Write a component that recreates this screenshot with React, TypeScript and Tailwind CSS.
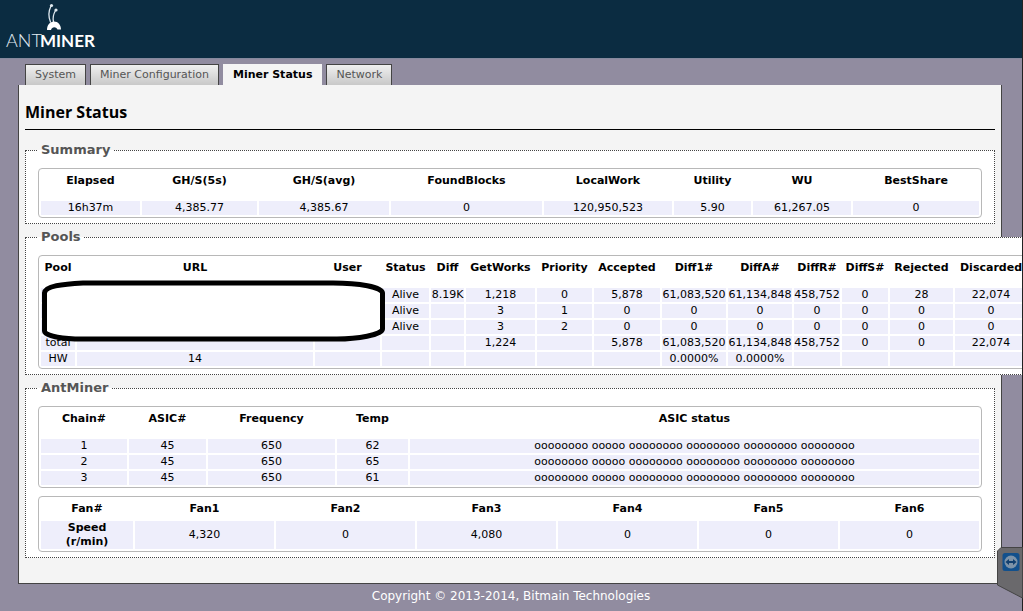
import React from 'react';

type Column = { label: string; width: string };

interface DataTableProps {
  columns: Column[];
  rows: string[][];
  compactHead?: boolean;
  rowHeaders?: boolean;
  className?: string;
}

const TABS = ['System', 'Miner Configuration', 'Miner Status', 'Network'];

const SUMMARY_COLUMNS: Column[] = [
  { label: 'Elapsed', width: 'w-[99px]' },
  { label: 'GH/S(5s)', width: 'w-[115px]' },
  { label: 'GH/S(avg)', width: 'w-[130px]' },
  { label: 'FoundBlocks', width: 'w-[151px]' },
  { label: 'LocalWork', width: 'w-[128px]' },
  { label: 'Utility', width: 'w-[77px]' },
  { label: 'WU', width: 'w-[98px]' },
  { label: 'BestShare', width: 'w-[126px]' },
];

const SUMMARY_ROWS = [
  ['16h37m', '4,385.77', '4,385.67', '0', '120,950,523', '5.90', '61,267.05', '0'],
];

const POOL_COLUMNS: Column[] = [
  { label: 'Pool', width: 'w-[34px]' },
  { label: 'URL', width: 'w-[236px]' },
  { label: 'User', width: 'w-[65px]' },
  { label: 'Status', width: 'w-[47px]' },
  { label: 'Diff', width: 'w-[33px]' },
  { label: 'GetWorks', width: 'w-[69px]' },
  { label: 'Priority', width: 'w-[55px]' },
  { label: 'Accepted', width: 'w-[66px]' },
  { label: 'Diff1#', width: 'w-[64px]' },
  { label: 'DiffA#', width: 'w-[64px]' },
  { label: 'DiffR#', width: 'w-[46px]' },
  { label: 'DiffS#', width: 'w-[46px]' },
  { label: 'Rejected', width: 'w-[63px]' },
  { label: 'Discarded', width: 'w-[72px]' },
];

const POOL_ROWS = [
  ['', '', '', 'Alive', '8.19K', '1,218', '0', '5,878', '61,083,520', '61,134,848', '458,752', '0', '28', '22,074'],
  ['', '', '', 'Alive', '', '3', '1', '0', '0', '0', '0', '0', '0', '0'],
  ['', '', '', 'Alive', '', '3', '2', '0', '0', '0', '0', '0', '0', '0'],
  ['total', '', '', '', '', '1,224', '', '5,878', '61,083,520', '61,134,848', '458,752', '0', '0', '22,074'],
  ['HW', '14', '', '', '', '', '', '', '0.0000%', '0.0000%', '', '', '', ''],
];

const CHAIN_COLUMNS: Column[] = [
  { label: 'Chain#', width: 'w-[86px]' },
  { label: 'ASIC#', width: 'w-[77px]' },
  { label: 'Frequency', width: 'w-[127px]' },
  { label: 'Temp', width: 'w-[71px]' },
  { label: 'ASIC status', width: 'w-[569px]' },
];

const ASIC_STATUS = 'oooooooo ooooo oooooooo oooooooo oooooooo oooooooo';

const CHAIN_ROWS = [
  ['1', '45', '650', '62', ASIC_STATUS],
  ['2', '45', '650', '65', ASIC_STATUS],
  ['3', '45', '650', '61', ASIC_STATUS],
];

const FAN_COLUMNS: Column[] = [
  { label: 'Fan#', width: 'w-[92px]' },
  { label: 'Fan1', width: 'w-[139px]' },
  { label: 'Fan2', width: 'w-[139px]' },
  { label: 'Fan3', width: 'w-[139px]' },
  { label: 'Fan4', width: 'w-[139px]' },
  { label: 'Fan5', width: 'w-[139px]' },
  { label: 'Fan6', width: 'w-[139px]' },
];

const FAN_ROWS = [['Speed (r/min)', '4,320', '0', '4,080', '0', '0', '0']];

const DataTable: React.FC<DataTableProps> = ({
  columns,
  rows,
  compactHead = false,
  rowHeaders = false,
  className = 'w-full',
}) => (
  <table
    className={`table-fixed border-separate border-spacing-[2px] rounded border border-[#b8b8b8] bg-white text-center text-[11px] leading-[14px] text-black ${className}`}
  >
    <colgroup>
      {columns.map((column) => (
        <col key={column.label} className={column.width} />
      ))}
    </colgroup>
    <thead>
      <tr className={compactHead ? 'h-5' : 'h-7'}>
        {columns.map((column) => (
          <th
            key={column.label}
            scope="col"
            className={`whitespace-nowrap p-0 font-bold ${compactHead ? '' : 'pb-2'}`}
          >
            <span className="-mx-2">{column.label}</span>
          </th>
        ))}
      </tr>
    </thead>
    <tbody>
      {rows.map((row, rowIndex) => (
        <tr key={rowIndex} className="h-[14px] bg-[#eeeefb]">
          {row.map((cell, index) =>
            rowHeaders && index === 0 ? (
              <th key={index} scope="row" className="px-4 py-0 font-bold">
                {cell}
              </th>
            ) : (
              <td key={index} className="whitespace-nowrap p-0">
                {cell}
              </td>
            )
          )}
        </tr>
      ))}
    </tbody>
  </table>
);

const Section: React.FC<{ title: string; children: React.ReactNode }> = ({ title, children }) => (
  <fieldset className="border border-dotted border-[#444] bg-white px-3 pb-[5px]">
    <legend className="px-[3px] text-[13px] font-bold leading-4 text-[#555]">{title}</legend>
    <div className="flex flex-col gap-2 pt-[10px]">{children}</div>
  </fieldset>
);

const Logo = () => (
  <svg className="h-[50px] w-[100px]" viewBox="0 0 100 50" role="img" aria-label="AntMiner">
    <g fill="none" stroke="#dfe9ef" strokeLinecap="round">
      <path d="M50.500 22 C48 16 48.500 11 51 6" strokeWidth="1.300" />
      <path d="M53.500 22 C52.500 18 53.500 14 55.500 10.500" strokeWidth="1.300" />
    </g>
    <circle cx="51.500" cy="5.500" r="1.600" fill="#dfe9ef" />
    <circle cx="56" cy="10" r="1.600" fill="#dfe9ef" />
    <path d="M47 30 C47 25 50 21.500 54 21.500 C58 21.500 61 25 61 29.500 L57.500 29.500 C56 26.500 52 26.500 51 30 Z" fill="#fff" />
    <text x="6" y="47" fill="#e3edf3" fontFamily="Lato, sans-serif" fontWeight="300" fontSize="18">ANT</text>
    <text x="40" y="47" fill="#fff" fontFamily="Lato, sans-serif" fontWeight="700" fontSize="17">MINER</text>
  </svg>
);

// Hand-drawn marker box hiding the pool credentials
const Redaction = () => (
  <svg
    className="absolute left-[3px] top-[25px] h-[62px] w-[345px]"
    viewBox="0 0 345 62"
    aria-hidden="true"
  >
    <path
      d="M42 3 H292 C318 3 341 7 341.500 13 V49 C341 55 316 59 296 59 H34 C16 58 3.500 55 3.500 51 V13 C4 6 22 4 42 3 Z"
      fill="#fff"
      stroke="#000"
      strokeWidth="5"
    />
  </svg>
);

const RemoteBadge = () => (
  <svg className="fixed bottom-[10px] right-0 h-[54px] w-[26px]" viewBox="0 0 26 54" aria-hidden="true">
    <path d="M4 .5 H25.500 V51 L.5 38 V4 Z" fill="#6a696c" stroke="#444" />
    <rect x="5.500" y="6" width="17" height="18" rx="2.500" fill="#12508c" />
    <circle cx="14" cy="15" r="6.500" fill="#7d93a8" />
    <path d="M8.500 15 L12 12 V14 H16 V12 L19.500 15 L16 18 V16 H12 V18 Z" fill="#12406f" />
  </svg>
);

export default function App() {
  return (
    <div className="min-h-screen overflow-x-hidden border-r border-[#222] bg-[#918ca0] font-['DejaVu_Sans',Verdana,sans-serif] text-[11px]">
      <header className="h-[59px] border-b border-[#858a9e] bg-[#0b2c41]">
        <Logo />
      </header>

      <nav className="flex gap-1 pl-[25px] pt-[5px]">
        {TABS.map((tab) => (
          <a
            key={tab}
            href="#"
            aria-current={tab === 'Miner Status' ? 'page' : undefined}
            className={
              tab === 'Miner Status'
                ? 'h-[21px] bg-[#f4f4f4] px-[10px] font-bold leading-[21px] text-black'
                : 'h-[21px] border border-b-0 border-[#444] bg-linear-to-b from-[#f0f0f0] to-[#c8c8c8] px-[9px] leading-5 text-[#555]'
            }
          >
            {tab}
          </a>
        ))}
      </nav>

      <main className="ml-[18px] mr-[20px] border border-t-0 border-[#444] bg-[#f4f4f4] px-[6px] pb-[25px]">
        <h1 className="mb-3 border-b border-black pb-[5px] pt-[15px] font-['Open_Sans','Trebuchet_MS',sans-serif] text-[16px] font-bold leading-6 text-black">
          Miner Status
        </h1>
        <div className="flex flex-col gap-[5px]">
          <Section title="Summary">
            <DataTable columns={SUMMARY_COLUMNS} rows={SUMMARY_ROWS} />
          </Section>
          <Section title="Pools">
            <div className="relative">
              <DataTable columns={POOL_COLUMNS} rows={POOL_ROWS} className="w-[992px]" />
              <Redaction />
            </div>
          </Section>
          <Section title="AntMiner">
            <DataTable columns={CHAIN_COLUMNS} rows={CHAIN_ROWS} />
            <DataTable columns={FAN_COLUMNS} rows={FAN_ROWS} compactHead rowHeaders />
          </Section>
        </div>
      </main>

      <footer className="pb-1 pt-1 text-center text-[12px] leading-4 text-white">
        Copyright © 2013-2014, Bitmain Technologies
      </footer>
      <RemoteBadge />
    </div>
  );
}
